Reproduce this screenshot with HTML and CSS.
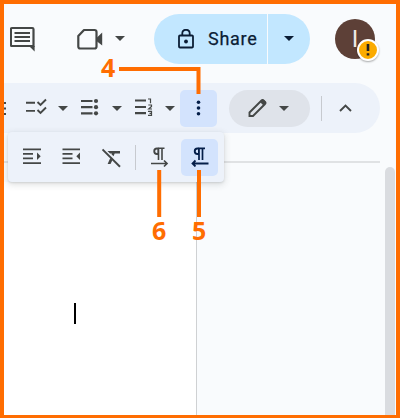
FILE: index.html
```html
<!DOCTYPE html>
<html lang="en">
<head>
<meta charset="utf-8">
<title>Document editor</title>
<link rel="stylesheet" href="styles.css">
</head>
<body>
<div class="frame">
  <header class="header">
    <svg class="ico comment" width="26" height="26" viewBox="10 26 26 26"><path d="M12.200 28H32.200q1.300 0 1.300 1.300V46H12.200q-1.300 0-1.300-1.300V29.300q0-1.300 1.300-1.300z" fill="none" stroke="#444746" stroke-width="2.200"/><path d="M29 46h5.600v5.500z" fill="#444746"/><path d="M14.500 33h15.500M14.500 37h15.500M14.500 41h15.500" stroke="#444746" stroke-width="2.200"/></svg>
    <svg class="ico camera" width="27" height="22" viewBox="77 28 27 22"><path d="M84 30h10.500q2 0 2 2v14.500q0 2-2 2H80.300q-2 0-2-2V36z" fill="none" stroke="#444746" stroke-width="2.200" stroke-linejoin="round"/><path d="M96.500 38l5.700-5.500v13L96.500 41z" fill="#444746"/></svg>
    <svg class="caret" width="10" height="5" viewBox="0 0 10 5"><path d="M0 0h10L5 5z"/></svg>
    <div class="share">
      <button class="share-main">
        <svg width="16" height="20" viewBox="178 28 16 20"><path d="M180 34.500h12q1 0 1 1v10q0 1-1 1h-12q-1 0-1-1V35.500q0-1 1-1zM182.300 34.500v-2q0-3.700 3.700-3.700t3.700 3.700v2" fill="none" stroke="#0b1d35" stroke-width="1.800"/><circle cx="186" cy="40.500" r="1.900" fill="#0b1d35"/></svg>
        <span class="share-label">Share</span>
      </button>
      <button class="share-more" aria-label="Share options"><svg class="caret dark" width="10" height="5" viewBox="0 0 10 5"><path d="M0 0h10L5 5z"/></svg></button>
    </div>
    <div class="avatar">I<span class="badge"><svg width="18" height="18" viewBox="0 0 18 18"><path d="M7.700 3h2.600v7H7.700zM7.700 12.200h2.600v2.300H7.700z" fill="#202124"/></svg></span></div>
  </header>

  <nav class="toolbar">
    <svg class="stub" width="3" height="18" viewBox="0 0 3 18"><path d="M0 4h2M0 9.500h2M0 15h2" stroke="#444746" stroke-width="1.800"/></svg>
    <svg class="checklist" width="21" height="50" viewBox="26 83 21 50"><path d="M26 102.700h9M26 110.900h9M37.500 102l3 3 5.500-5.500M37.500 110l3 3 5.500-5.500" fill="none" stroke="#444746" stroke-width="1.900"/></svg>
    <svg class="caret c1" width="10" height="5" viewBox="0 0 10 5"><path d="M0 0h10L5 5z"/></svg>
    <svg class="bullets" width="18" height="50" viewBox="81 83 18 50"><path d="M81 101h11.500M81 107.200h11.500M81 113.300h11.500" stroke="#444746" stroke-width="2.200"/><g fill="#444746"><circle cx="96" cy="101" r="2.100"/><circle cx="96" cy="107.200" r="2.100"/><circle cx="96" cy="113.300" r="2.100"/></g></svg>
    <svg class="caret c2" width="10" height="5" viewBox="0 0 10 5"><path d="M0 0h10L5 5z"/></svg>
    <svg class="numbers" width="18" height="50" viewBox="135 83 18 50"><path d="M135 100.500h11M135 107h11M135 113.200h11" stroke="#444746" stroke-width="2.200"/><path d="M148 99h2.500v4.200M148.300 105h3.200v1.500l-2.800 2.500h3.300M148 111.300h3.500v4H148M149.500 113.300h2" fill="none" stroke="#444746" stroke-width="1.200"/></svg>
    <svg class="caret c3" width="10" height="5" viewBox="0 0 10 5"><path d="M0 0h10L5 5z"/></svg>
    <button class="tool active more" aria-label="More"><svg width="5" height="18" viewBox="0 0 5 18"><g fill="#041e49"><circle cx="2.500" cy="3.200" r="1.800"/><circle cx="2.500" cy="9" r="1.800"/><circle cx="2.500" cy="14.800" r="1.800"/></g></svg></button>
    <button class="mode" aria-label="Editing mode">
      <svg width="19" height="19" viewBox="248 98 19 19"><path d="M249.500 115v-3.500l12-12q1-1 2 0l1.500 1.500q1 1 0 2l-12 12z" fill="none" stroke="#444746" stroke-width="1.900"/><path d="M260 101l2-2q1-1 2 0l1.500 1.500q1 1 0 2l-2 2z" fill="#444746"/></svg>
      <svg class="caret" width="10" height="5" viewBox="0 0 10 5"><path d="M0 0h10L5 5z"/></svg>
    </button>
    <span class="rule"></span>
    <svg class="chevron" width="13" height="8" viewBox="0 0 13 8"><path d="M1 7l5.500-5.500L12 7" fill="none" stroke="#444746" stroke-width="1.900"/></svg>
  </nav>

  <main class="workspace">
    <section class="canvas">
      <div class="ruler"></div>
      <div class="page"><span class="cursor"></span></div>
    </section>
    <div class="scrollbar"></div>
  </main>

  <div class="popup">
    <svg class="indent" width="18" height="50" viewBox="23 132 18 50"><path d="M23 149.300h18M23 153.900h10M23 158.400h10M23 163.200h18" stroke="#444746" stroke-width="1.800"/><path d="M37 152.500l3.700 3.700-3.700 3.700z" fill="#444746"/></svg>
    <svg class="outdent" width="18" height="50" viewBox="62 132 18 50"><path d="M62.500 149.300H80M62.500 153.900h10M62.500 158.400h10M62.500 163.200H80" stroke="#444746" stroke-width="1.800"/><path d="M80 152.500l-3.700 3.700 3.700 3.700z" fill="#444746"/></svg>
    <svg class="clear" width="20" height="50" viewBox="102 132 20 50"><path d="M102.500 149.500l17.500 17.200" stroke="#444746" stroke-width="1.900"/><path d="M107.500 151H120v2.500h-5.300l-1.200 2.800-2-2 .4-.8H110zM110.300 158l2.200 2-2 4h-2.900z" fill="#444746"/></svg>
    <span class="rule"></span>
    <svg class="direction" width="18" height="50" viewBox="151 132 18 50"><path d="M158 148.300h6.500M158.500 148v12M162 148v12" fill="none" stroke="#444746" stroke-width="1.600"/><path d="M158.500 147.500h-1.500q-3.700 0-3.700 3.700t3.700 3.700h1.500zM157.500 149.400h-.7q-1.600 0-1.600 1.800t1.600 1.800h.7z" fill="#444746" fill-rule="evenodd"/><path d="M151 163.500h15.500M164 160.500l3 3-3 3" fill="none" stroke="#444746" stroke-width="1.700"/></svg>
    <button class="tool active rtl" aria-label="Right to left"><svg width="18" height="20" viewBox="190 147 18 20"><path d="M197.500 148.300h6.500M198 148v12M201.500 148v12" fill="none" stroke="#041e49" stroke-width="1.700"/><path d="M198 147.500h-1.500q-3.700 0-3.700 3.700t3.700 3.700h1.500zM197 149.400h-.7q-1.600 0-1.600 1.800t1.600 1.800h.7z" fill="#041e49" fill-rule="evenodd"/><path d="M191.500 163.500H207.500M194.500 160.500l-3 3 3 3" fill="none" stroke="#041e49" stroke-width="1.800"/></svg></button>
  </div>

  <svg class="annotations" width="400" height="418" viewBox="0 0 400 418">
    <path d="M119 69h79.500v25M159.200 170v47M199 170v47" fill="none" stroke="#ff6d01" stroke-width="4"/>
    <text x="101" y="76.500">4</text>
    <text x="152" y="239.500">6</text>
    <text x="192" y="239.500">5</text>
  </svg>
</div>
</body>
</html>
```
FILE: styles.css
```css
* { box-sizing: border-box; }
body { margin: 0; }
button { border: 0; padding: 0; font: inherit; background: none; }
svg { display: block; flex: none; }

.frame {
  position: relative;
  display: flex;
  flex-direction: column;
  width: 400px;
  height: 418px;
  border: 4px solid #ff6d01;
  border-bottom-width: 3px;
  background: #f9fbfd;
  overflow: hidden;
  font-family: Roboto, sans-serif;
}
.caret { fill: #444746; }
.caret.dark { fill: #0b1d35; }

.header { display: flex; align-items: center; height: 69px; flex: none; margin-bottom: 10px; }
.comment { margin-left: 6px; }
.camera { margin-left: 41px; }
.header > .caret { margin-left: 11px; }
.share { display: flex; width: 156px; height: 50px; margin-left: 29px; border-radius: 25px; background: #c2e7ff; overflow: hidden; }
.share-main { display: flex; align-items: center; width: 114px; padding-left: 24px; gap: 14px; border-right: 1px solid #f9fbfd; color: #0b1d35; font-size: 18px; letter-spacing: .7px; -webkit-text-stroke: .25px #0b1d35; }
.share-label { margin-bottom: 1px; }
.share-more { display: flex; flex: 1; align-items: center; justify-content: center; }
.avatar { position: relative; display: flex; align-items: center; justify-content: center; width: 40px; height: 40px; margin-left: 25px; border-radius: 50%; background: #5d4037; color: #eee8e5; font-size: 24px; }
.badge { position: absolute; left: 22px; top: 20px; width: 22px; height: 22px; border: 2px solid #fff; border-radius: 50%; background: #fbab00; box-shadow: 0 1px 2px #0005; }

.toolbar { display: flex; align-items: center; flex: none; width: 376px; height: 50px; border-radius: 0 25px 25px 0; background: #edf2fa; }
.checklist { margin-left: 19px; }
.c1 { margin-left: 11px; }
.bullets { margin-left: 13px; }
.c2 { margin-left: 13px; }
.numbers { margin-left: 13px; }
.c3 { margin-left: 12px; }
.tool { display: flex; align-items: center; justify-content: center; width: 37px; height: 37px; flex: none; border-radius: 5px; }
.active { background: #d3e3fd; }
.more { margin-left: 5px; }
.mode { display: flex; align-items: center; gap: 12px; width: 81px; height: 37px; margin-left: 12px; padding-left: 19px; border-radius: 19px; background: #dfe3ea; }
.rule { width: 1px; height: 25px; background: #c7cacf; }
.toolbar .rule { margin-left: 11px; }
.chevron { margin-left: 17px; }

.workspace { display: flex; flex: 1; }
.canvas { display: flex; flex-direction: column; width: 376px; padding-top: 28px; }
.ruler { height: 21px; border-top: 2px solid #e0e2e4; }
.page { flex: 1; width: 193px; padding: 121px 0 0 69.500px; border-right: 1px solid #cfd1d3; background: #fff; }
.cursor { display: block; width: 2.500px; height: 21px; background: #000; }
.scrollbar { width: 10px; margin: 34px 0 0 5px; border-radius: 5px 5px 0 0; background: #dadce0; }

.popup { position: absolute; left: 4px; top: 128px; display: flex; align-items: center; width: 216px; height: 50px; border-radius: 4px; background: #edf2fa; box-shadow: 0 2px 6px 1px #3c404326, 0 1px 2px #3c404322; }
.indent { margin-left: 15px; }
.outdent { margin-left: 21px; }
.clear { margin-left: 22px; }
.popup .rule { margin-left: 13px; }
.direction { margin-left: 15px; }
.rtl { margin-left: 12px; }

.annotations { position: absolute; left: -4px; top: -4px; pointer-events: none; }
.annotations text { font: bold 25px "Open Sans", sans-serif; fill: #ff6d01; }
```
